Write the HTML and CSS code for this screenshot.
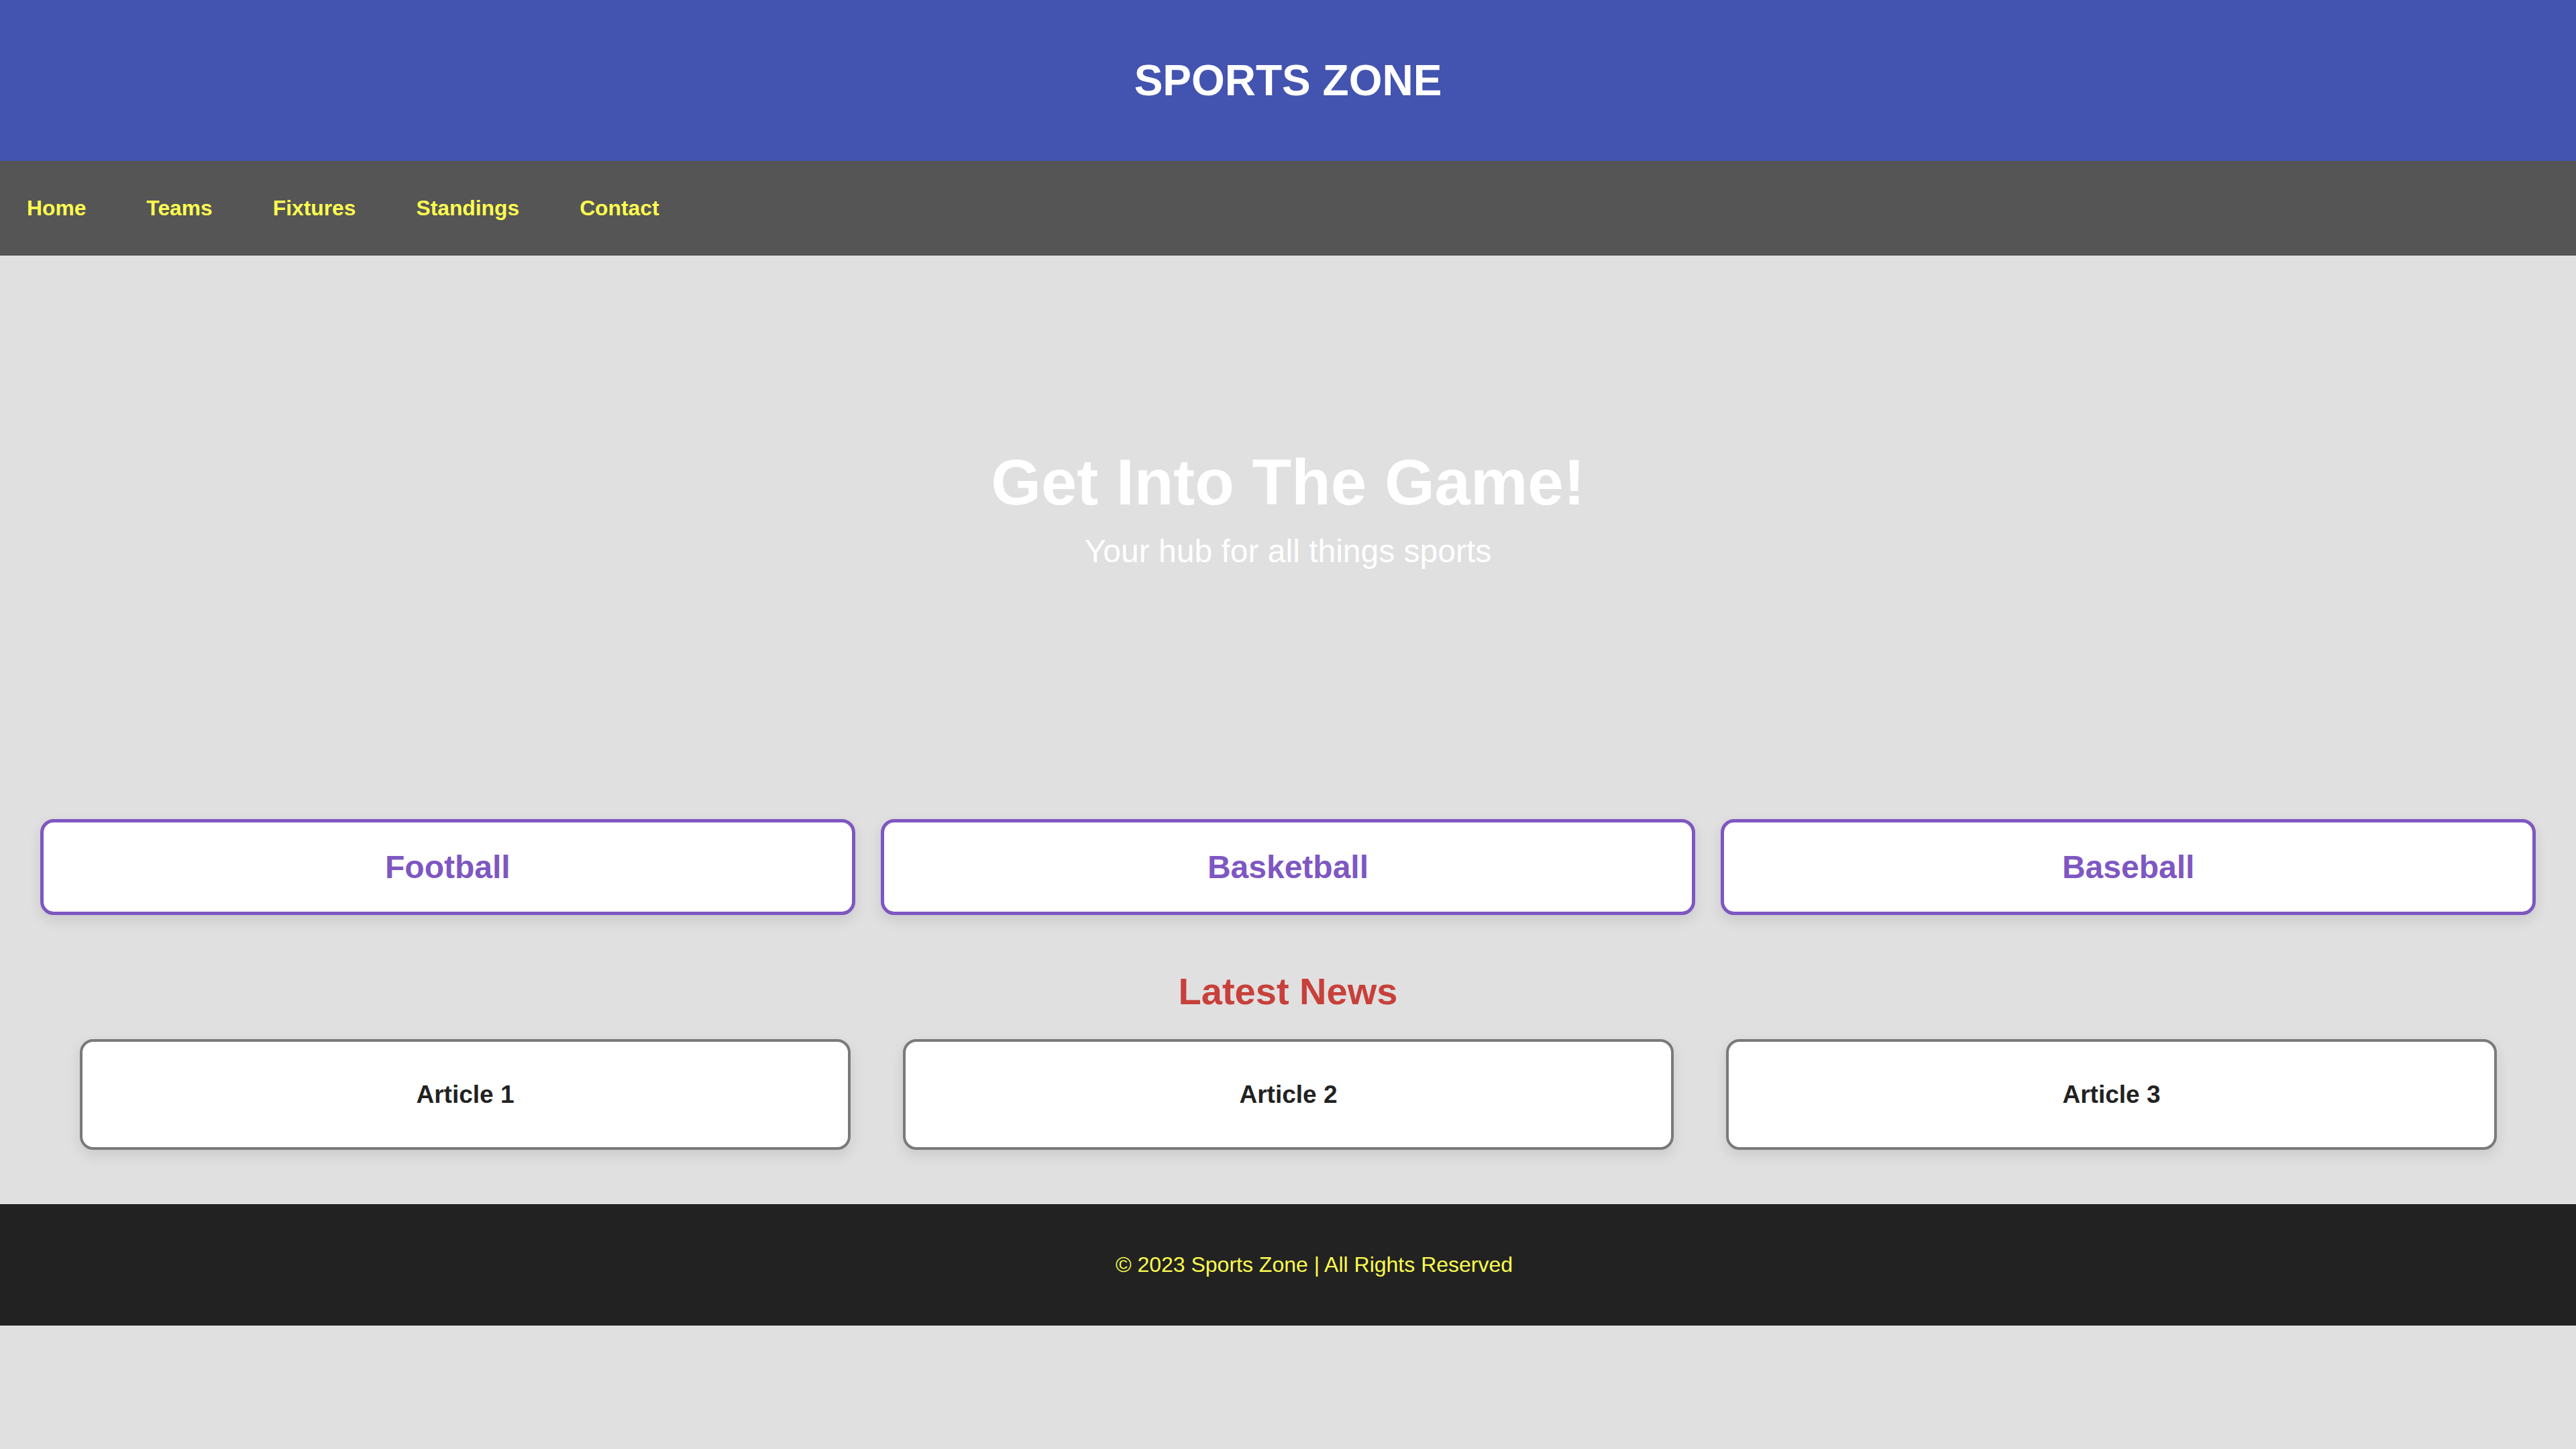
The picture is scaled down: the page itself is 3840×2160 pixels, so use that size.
FILE: index.html
```html
<!DOCTYPE html>
<html lang="en">
<head>
<meta charset="utf-8">
<title>Sports Zone</title>
<link rel="stylesheet" href="styles.css">
</head>
<body>
  <header class="site-header">
    <h1 class="site-title">SPORTS ZONE</h1>
  </header>
  <nav class="main-nav">
    <ul class="nav-list">
      <li><a href="#">Home</a></li>
      <li><a href="#">Teams</a></li>
      <li><a href="#">Fixtures</a></li>
      <li><a href="#">Standings</a></li>
      <li><a href="#">Contact</a></li>
    </ul>
  </nav>
  <section class="hero">
    <h2 class="hero-title">Get Into The Game!</h2>
    <p class="hero-sub">Your hub for all things sports</p>
  </section>
  <section class="categories">
    <div class="cat-card">Football</div>
    <div class="cat-card">Basketball</div>
    <div class="cat-card">Baseball</div>
  </section>
  <section class="news">
    <h2 class="news-title">Latest News</h2>
    <div class="news-list">
      <div class="article-card">Article 1</div>
      <div class="article-card">Article 2</div>
      <div class="article-card">Article 3</div>
    </div>
  </section>
  <footer class="site-footer">
    <p class="footer-text">© 2023 Sports Zone | All Rights Reserved</p>
  </footer>
</body>
</html>
```

FILE: styles.css
```css
* {
  box-sizing: border-box;
}

html, body {
  margin: 0;
  padding: 0;
}

body {
  background: #e0e0e0;
  font-family: "Liberation Sans", Arial, sans-serif;
  min-height: 2160px;
}

.site-header {
  background: #4353b0;
  height: 240px;
  display: flex;
  align-items: center;
  justify-content: center;
}

.site-title {
  margin: 0;
  color: #ffffff;
  font-size: 64px;
  font-weight: bold;
}

.main-nav {
  background: #555555;
  height: 141px;
  display: flex;
  align-items: center;
  padding-left: 40px;
}

.nav-list {
  list-style: none;
  margin: 0;
  padding: 0;
  display: flex;
  gap: 90px;
}

.nav-list a {
  color: #fdfd4f;
  text-decoration: none;
  font-weight: bold;
  font-size: 31.8px;
}

.hero {
  padding: 283px 0 312px;
  text-align: center;
  color: #ffffff;
}

.hero-title {
  margin: 0 0 20px;
  font-size: 96px;
  font-weight: bold;
}

.hero-sub {
  margin: 0;
  font-size: 48px;
}

.categories {
  display: grid;
  grid-template-columns: repeat(3, 1fr);
  gap: 38px;
  padding: 60px 60px 0;
}

.cat-card {
  background: #ffffff;
  border: 5px solid #7e57c2;
  border-radius: 20px;
  height: 143px;
  display: flex;
  align-items: center;
  justify-content: center;
  color: #7e57c2;
  font-size: 48px;
  font-weight: bold;
  box-shadow: 0 8px 20px rgba(0, 0, 0, 0.1);
}

.news {
  padding-top: 81px;
}

.news-title {
  margin: 0 0 39px;
  text-align: center;
  color: #c8403a;
  font-size: 56px;
  font-weight: bold;
}

.news-list {
  display: grid;
  grid-template-columns: repeat(3, 1fr);
  gap: 78px;
  padding: 0 118px 0 119px;
}

.article-card {
  background: #ffffff;
  border: 4px solid #7a7a7a;
  border-radius: 20px;
  height: 165px;
  display: flex;
  align-items: center;
  justify-content: center;
  color: #222222;
  font-size: 37px;
  font-weight: bold;
  box-shadow: 0 8px 20px rgba(0, 0, 0, 0.1);
}

.site-footer {
  margin-top: 81px;
  background: #222222;
  height: 181px;
  display: flex;
  align-items: center;
  justify-content: center;
  padding-left: 78px;
}

.footer-text {
  margin: 0;
  color: #fdfd4f;
  font-size: 32px;
}
```
